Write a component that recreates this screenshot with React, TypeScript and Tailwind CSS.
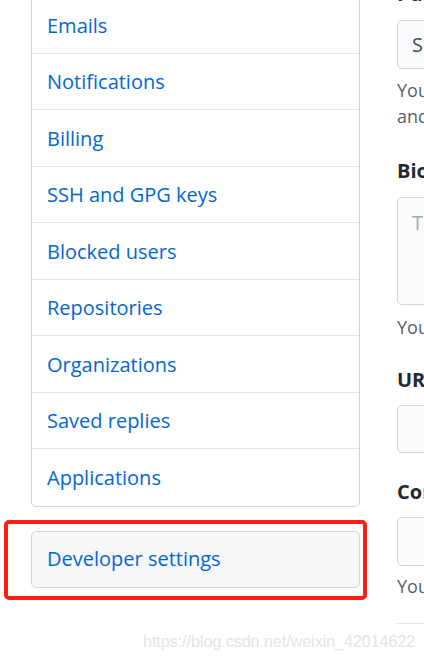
import React from 'react';

const menuItems = [
  'Emails',
  'Notifications',
  'Billing',
  'SSH and GPG keys',
  'Blocked users',
  'Repositories',
  'Organizations',
  'Saved replies',
  'Applications',
];

const font = { fontFamily: '"Open Sans", "Noto Sans", sans-serif' };

const App: React.FC = () => {
  return (
    <div className="relative w-[424px] h-[658px] overflow-hidden bg-white" style={font}>
      <div className="flex items-start">
        {/* Left settings menu */}
        <div className="w-[363px] ml-[4px] shrink-0">
          <nav className="ml-[27px] w-[329px] -mt-[4px] border border-[#d1d5da] rounded-[5px] bg-white">
            {menuItems.map((item, i) => (
              <a
                key={item}
                href="#"
                className={`flex items-center h-[56.5px] px-[15px] pt-[2px] text-[20px] text-[#0366d6] ${
                  i < menuItems.length - 1 ? 'border-b border-[#e1e4e8]' : ''
                }`}
              >
                {item}
              </a>
            ))}
          </nav>

          {/* Highlighted developer settings */}
          <div className="mt-[13px] h-[80px] border-[4px] border-[#ff1e12] rounded-[5px] pt-[7px] pl-[23px] pr-[3px]">
            <a
              href="#"
              className="flex items-center h-[57px] px-[15px] text-[20px] text-[#0366d6] bg-[#f6f8fa] border border-[#d1d5da] rounded-[5px]"
            >
              Developer settings
            </a>
          </div>
        </div>

        {/* Right profile form */}
        <div className="ml-[30px] w-[480px] shrink-0 -mt-[21px]">
          <div className="h-[30px] leading-[30px] text-[20px] font-bold text-[#24292e]">Public email</div>
          <div className="mt-[11px] h-[49px] flex items-center px-[14px] border border-[#d1d5da] rounded-[5px] bg-[#fafbfc] text-[20px] text-[#444d56] whitespace-nowrap">
            Select a verified email to display
          </div>
          <p className="mt-[8px] text-[18px] leading-[26px] text-[#586069] whitespace-nowrap">
            You can manage verified email addresses in your
            <br />
            and privacy settings.
          </p>

          <div className="mt-[27px] h-[30px] leading-[30px] text-[20px] font-bold text-[#24292e]">Bio</div>
          <div className="mt-[11px] h-[108px] px-[14px] pt-[10px] border border-[#d1d5da] rounded-[5px] bg-[#fafbfc] text-[20px] text-[#a3aab1] whitespace-nowrap">
            Tell us a little bit about yourself
          </div>
          <p className="mt-[9px] text-[18px] leading-[26px] text-[#586069] whitespace-nowrap">
            You can @mention other users and organizations to link to them.
          </p>

          <div className="mt-[25px] h-[30px] leading-[30px] text-[20px] font-bold text-[#24292e]">URL</div>
          <div className="mt-[10px] h-[48px] border border-[#d1d5da] rounded-[5px] bg-[#fafbfc]" />

          <div className="mt-[24px] h-[30px] leading-[30px] text-[20px] font-bold text-[#24292e]">Company</div>
          <div className="mt-[10px] h-[49px] border border-[#d1d5da] rounded-[5px] bg-[#fafbfc]" />
          <p className="mt-[7px] text-[18px] leading-[26px] text-[#586069] whitespace-nowrap">
            You can @mention your company's GitHub organization to link it.
          </p>

          <div className="mt-[24px] border-t border-[#e1e4e8]" />
          <div className="mt-[27px] h-[30px] leading-[30px] text-[20px] font-bold text-[#24292e]">Location</div>
        </div>
      </div>

      {/* Watermark */}
      <div
        className="absolute left-[143px] top-[630px] text-[16px] text-[#e3e3e3] whitespace-nowrap"
        style={{ fontFamily: '"Liberation Sans", Arial, sans-serif' }}
      >
        https://blog.csdn.net/weixin_42014622
      </div>
    </div>
  );
};

export default App;
